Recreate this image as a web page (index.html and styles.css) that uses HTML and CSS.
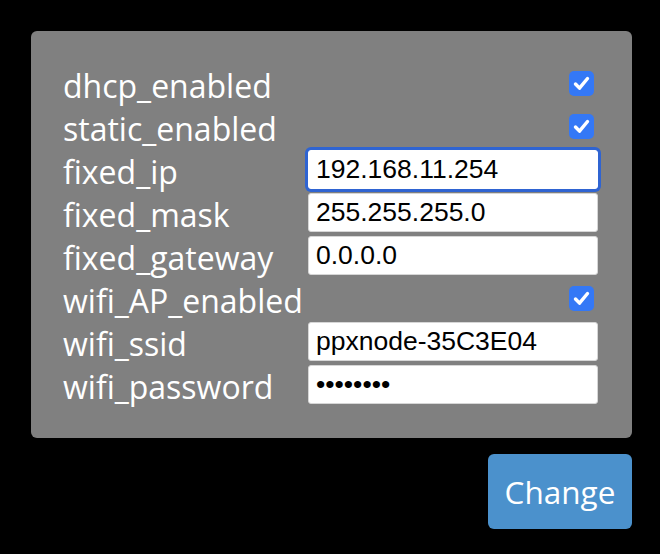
FILE: index.html
```html
<!doctype html>
<html lang="en">
<head>
    <meta charset="UTF-8">
    <title>Network settings</title>
<link rel="stylesheet" href="styles.css">
</head>
<body>
<form id="netForm" class="wrap">
<div class="panel">
<label for="dhcp_enabled">dhcp_enabled</label>
<input class="tick" type="checkbox" id="dhcp_enabled" checked>
<label for="static_enabled">static_enabled</label>
<input class="tick" type="checkbox" id="static_enabled" checked>
<label for="fixed_ip">fixed_ip</label>
<input class="field focus" type="text" id="fixed_ip" value="192.168.11.254">
<label for="fixed_mask">fixed_mask</label>
<input class="field" type="text" id="fixed_mask" value="255.255.255.0">
<label for="fixed_gateway">fixed_gateway</label>
<input class="field" type="text" id="fixed_gateway" value="0.0.0.0">
<label for="wifi_AP_enabled">wifi_AP_enabled</label>
<input class="tick" type="checkbox" id="wifi_AP_enabled" checked>
<label for="wifi_ssid">wifi_ssid</label>
<input class="field" type="text" id="wifi_ssid" value="ppxnode-35C3E04">
<label for="wifi_password">wifi_password</label>
<input class="field" type="password" id="wifi_password" value="12345678">
</div>
<div class="actions">
<button type="submit">Change</button>
</div>
</form>
</body>
</html>
```

FILE: styles.css
```css
        body {
            background-color: #000;
            margin: 0;
            font-family: "Open Sans", "Noto Sans", sans-serif;
        }
        .wrap {
            padding: 31px 28px 0 31px;
        }
        .panel {
            background-color: #808080;
            border-radius: 6px;
            padding: 31px 34px 32px 32px;
            display: grid;
            grid-template-columns: 1fr 290px;
            grid-auto-rows: 43px;
            align-items: center;
        }
        .panel label {
            color: #fff;
            font-size: 32px;
            line-height: 43px;
            padding-top: 3px;
            white-space: nowrap;
        }
        .field {
            box-sizing: border-box;
            width: 290px;
            height: 39px;
            margin: 0;
            padding: 0 7px;
            border: 1px solid #d6d6d6;
            border-radius: 3px;
            background: #fff;
            color: #000;
            font-family: "Liberation Sans", Arial, sans-serif;
            font-size: 26.5px;
            outline: none;
        }
        .field.focus {
            border-color: #fff;
            box-shadow: 0 0 0 3px #2f64d2;
        }
        .tick {
            -webkit-appearance: none;
            appearance: none;
            justify-self: end;
            width: 25px;
            height: 25px;
            margin: 0 4px 0 0;
            border-radius: 5px;
            background-color: #3478f6;
            background-image: url("data:image/svg+xml,%3Csvg xmlns='http://www.w3.org/2000/svg' viewBox='0 0 25 25'%3E%3Cpath d='M6.5 13l4 4.2L18.5 7.5' fill='none' stroke='%23fff' stroke-width='3.4' stroke-linecap='round' stroke-linejoin='round'/%3E%3C/svg%3E");
            background-size: 25px 25px;
        }
        .actions {
            display: flex;
            justify-content: flex-end;
            margin-top: 16px;
        }
        button {
            font-family: "Open Sans", "Noto Sans", sans-serif;
            font-size: 31.5px;
            line-height: 43px;
            padding: 16px 15px;
            width: 144px;
            background-color: #4b91cc;
            color: #fff;
            border: none;
            border-radius: 6px;
            cursor: pointer;
        }
```
